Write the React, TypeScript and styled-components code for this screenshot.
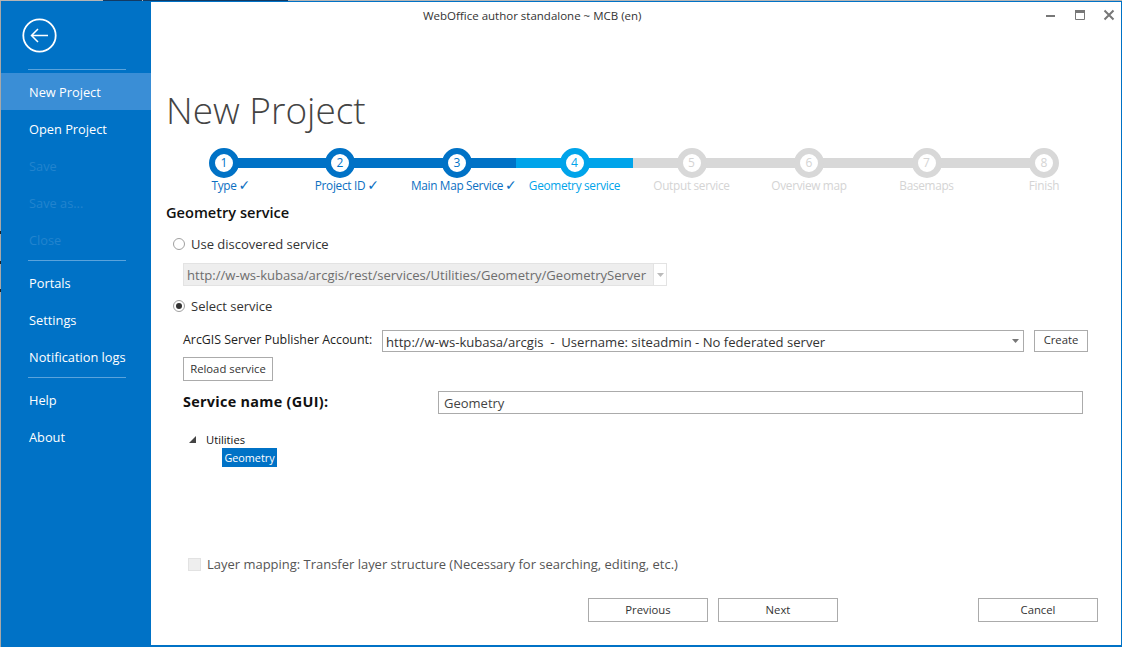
import React from 'react';
import styled, { createGlobalStyle } from 'styled-components';

const Global = createGlobalStyle`
  html, body { margin: 0; padding: 0; background: #fff; overflow: hidden; }
  * { box-sizing: border-box; }
`;

const BLUE = '#0072c6';
const FONT = `"Open Sans", "Noto Sans", "Liberation Sans", sans-serif`;

const Screen = styled.div`
  width: 1122px;
  height: 647px;
  display: flex;
  flex-direction: column;
  font-family: ${FONT};
  font-size: 12.5px;
  color: #262626;
  background:
    linear-gradient(#222, #222) 0 231px / 1px 3px no-repeat,
    linear-gradient(#222, #222) 0 261px / 1px 3px no-repeat,
    linear-gradient(#222, #222) 0 289px / 1px 3px no-repeat,
    #a8a8a8;
  overflow: hidden;
`;
const TopStrip = styled.div`
  height: 1px;
  flex: none;
  display: flex;
`;
const StripPart = styled.div<{ $w: number; $c: string }>`
  width: ${p => p.$w}px;
  background: ${p => p.$c};
  flex: ${p => (p.$w ? 'none' : '1')};
`;
const Frame = styled.div`
  flex: 1;
  display: flex;
  min-height: 0;
  margin-left: 1px;
  border-top: 1px solid ${BLUE};
  border-right: 1px solid ${BLUE};
  border-bottom: 2px solid ${BLUE};
  background: #fff;
`;
const Sidebar = styled.nav`
  width: 150px;
  flex: none;
  background: ${BLUE};
  display: flex;
  flex-direction: column;
  padding-top: 16px;
`;
const BackButton = styled.div`
  margin-left: 21px;
  width: 35px;
  height: 35px;
  svg { display: block; }
`;
const Rule = styled.div<{ $t: number; $b: number }>`
  height: 1px;
  margin: ${p => p.$t}px 25px ${p => p.$b}px 27px;
  background: #5aa3dc;
`;
const NavItem = styled.div<{ $active?: boolean; $disabled?: boolean }>`
  height: 37px;
  line-height: 39px;
  padding-left: 28px;
  font-size: 12.8px;
  color: ${p => (p.$disabled ? '#2284ce' : '#fff')};
  background: ${p => (p.$active ? '#3a8ed6' : 'transparent')};
`;
const Main = styled.main`
  flex: 1;
  display: flex;
  flex-direction: column;
  min-width: 0;
`;
const TitleBar = styled.header`
  height: 28px;
  flex: none;
  display: flex;
  align-items: center;
`;
const WindowTitle = styled.div`
  flex: 1;
  padding: 0 0 2px 272px;
  font-size: 11.5px;
  color: #333;
`;
const WindowControls = styled.div`
  width: 96px;
  flex: none;
  display: flex;
  gap: 13px;
  padding-left: 19px;
  svg { display: block; }
`;
const PageTitle = styled.h1`
  margin: 56px 0 0 15px;
  height: 48px;
  font-family: ${FONT};
  font-size: 37px;
  line-height: 48px;
  font-weight: 300;
  color: #444;
`;
const Stepper = styled.div`
  display: flex;
  margin: 14px 0 0 15px;
`;
const Step = styled.div<{ $w: number }>`
  width: ${p => p.$w}px;
  flex: none;
  display: flex;
  flex-direction: column;
  align-items: center;
`;
const DotRow = styled.div<{ $c: string; $edge?: 'first' | 'last' }>`
  width: 100%;
  height: 30px;
  display: flex;
  justify-content: center;
  align-items: center;
  background: linear-gradient(${p => p.$c}, ${p => p.$c})
    ${p => (p.$edge === 'first' ? 'right' : p.$edge === 'last' ? 'left' : 'center')} center /
    ${p => (p.$edge ? '50%' : '100%')} 10px no-repeat;
`;
const Dot = styled.div<{ $c: string; $text: string }>`
  width: 30px;
  height: 30px;
  border-radius: 50%;
  border: 6px solid ${p => p.$c};
  background: #fff;
  color: ${p => p.$text};
  font-size: 12px;
  line-height: 18px;
  text-align: center;
`;
const StepLabel = styled.div<{ $c: string }>`
  position: relative;
  margin-top: -1px;
  font-size: 11.8px;
  letter-spacing: -0.3px;
  line-height: 16px;
  white-space: nowrap;
  color: ${p => p.$c};
`;
const Check = styled.span`
  position: absolute;
  left: 100%;
  top: -1px;
  margin-left: 2px;
  font-family: "DejaVu Sans", sans-serif;
  font-size: 14px;
  letter-spacing: 0;
  line-height: 18px;
`;
const Form = styled.div`
  flex: 1;
  display: flex;
  flex-direction: column;
  padding-left: 15px;
`;
const SectionTitle = styled.div`
  margin-top: 9px;
  height: 20px;
  line-height: 20px;
  font-size: 14.6px;
  font-weight: 600;
  color: #111;
`;
const RadioRow = styled.label<{ $t: number }>`
  display: flex;
  align-items: center;
  height: 20px;
  margin: ${p => p.$t}px 0 0 7px;
  gap: 6px;
  font-size: 13px;
  color: #333;
`;
const Radio = styled.span<{ $on?: boolean }>`
  width: 12px;
  height: 12px;
  border-radius: 50%;
  border: 1px solid #a0a0a0;
  background: #fff;
  display: flex;
  align-items: center;
  justify-content: center;
  &::after {
    content: '';
    width: 6px;
    height: 6px;
    border-radius: 50%;
    background: ${p => (p.$on ? '#333' : 'transparent')};
  }
`;
const DisabledCombo = styled.div`
  margin: 9px 0 0 17px;
  width: 484px;
  height: 23px;
  display: flex;
  border: 1px solid #e3e3e3;
  background: #eee;
`;
const ComboValue = styled.div`
  flex: 1;
  padding-left: 3px;
  line-height: 23px;
  font-size: 13.07px;
  color: #6d6d6d;
  white-space: nowrap;
`;
const DisabledArrow = styled.div`
  width: 13px;
  flex: none;
  background: #fff;
  border-left: 1px solid #e3e3e3;
  display: flex;
  align-items: center;
  justify-content: center;
  svg { display: block; }
`;
const AccountRow = styled.div`
  display: flex;
  align-items: flex-start;
  margin: 14px 0 0 17px;
`;
const AccountLabel = styled.div`
  width: 199px;
  flex: none;
  padding-top: 1px;
  font-size: 12.4px;
  line-height: 18px;
  color: #222;
`;
const AccountCombo = styled.div`
  width: 642px;
  flex: none;
  height: 22px;
  display: flex;
  align-items: center;
  border: 1px solid #ababab;
  padding: 0 4px 0 3px;
`;
const AccountValue = styled.div`
  flex: 1;
  padding-top: 1px;
  font-size: 13.1px;
  color: #333;
  white-space: pre;
`;
const SmallButton = styled.div<{ $w: number }>`
  width: ${p => p.$w}px;
  flex: none;
  height: 23px;
  border: 1px solid #ababab;
  background: #fff;
  display: flex;
  align-items: center;
  justify-content: center;
  font-size: 11.3px;
  color: #333;
`;
const CreateButton = styled(SmallButton)`
  margin-left: 10px;
  height: 22px;
  padding-bottom: 3px;
`;
const ReloadButton = styled(SmallButton)`
  margin: 5px 0 0 17px;
  height: 24px;
  padding-bottom: 2px;
`;
const NameRow = styled.div`
  display: flex;
  align-items: center;
  margin: 10px 0 0 17px;
`;
const NameLabel = styled.div`
  width: 255px;
  flex: none;
  padding-bottom: 3px;
  font-size: 14.4px;
  letter-spacing: 0.3px;
  font-weight: 700;
  color: #111;
`;
const NameInput = styled.div`
  width: 645px;
  height: 23px;
  border: 1px solid #ababab;
  padding-left: 5px;
  line-height: 22px;
  font-size: 13px;
  color: #444;
`;
const Tree = styled.div`
  margin: 16px 0 0 23px;
  font-size: 11.2px;
`;
const TreeRow = styled.div`
  display: flex;
  align-items: center;
  height: 18px;
  gap: 10px;
  color: #111;
  svg { display: block; }
`;
const TreeSelected = styled.div`
  margin-left: 33px;
  width: 55px;
  height: 19px;
  line-height: 19px;
  text-align: center;
  font-size: 10.8px;
  background: ${BLUE};
  color: #fff;
`;
const CheckRow = styled.div`
  display: flex;
  align-items: center;
  gap: 6px;
  margin: 87px 0 0 22px;
  height: 20px;
  font-size: 12.97px;
  color: #555;
`;
const CheckBox = styled.span`
  width: 13px;
  height: 13px;
  background: #eee;
  border: 1px solid #e2e2e2;
`;
const Footer = styled.div`
  display: flex;
  margin: 24px 0 0 422px;
`;
const FooterButton = styled.div<{ $l: number }>`
  width: 120px;
  height: 24px;
  margin-left: ${p => p.$l}px;
  padding-bottom: 2px;
  border: 1px solid #ababab;
  display: flex;
  align-items: center;
  justify-content: center;
  font-size: 11.3px;
  color: #333;
`;

const C_DONE = BLUE;
const C_NOW = '#00a4ea';
const C_OFF = '#d8d8d8';
const steps: { n: number; label: string; w: number; state: 'done' | 'now' | 'off' }[] = [
  { n: 1, label: 'Type', w: 116, state: 'done' },
  { n: 2, label: 'Project ID', w: 116, state: 'done' },
  { n: 3, label: 'Main Map Service', w: 118, state: 'done' },
  { n: 4, label: 'Geometry service', w: 117, state: 'now' },
  { n: 5, label: 'Output service', w: 117, state: 'off' },
  { n: 6, label: 'Overview map', w: 118, state: 'off' },
  { n: 7, label: 'Basemaps', w: 117, state: 'off' },
  { n: 8, label: 'Finish', w: 118, state: 'off' },
];

export default function App() {
  return (
    <Screen>
      <Global />
      <TopStrip>
        <StripPart $w={103} $c="#b5b5b5" />
        <StripPart $w={39} $c="#123a63" />
        <StripPart $w={1} $c="#b5b5b5" />
        <StripPart $w={145} $c="#123a63" />
        <StripPart $w={0} $c="#b5b5b5" />
      </TopStrip>
      <Frame>
        <Sidebar>
          <BackButton>
            <svg width="35" height="35" viewBox="0 0 35 35" fill="none" stroke="#fff">
              <circle cx="17.5" cy="17.5" r="16.2" strokeWidth="1.8" />
              <path d="M26 17.5H9.5M16 11l-6.5 6.5L16 24" strokeWidth="1.5" />
            </svg>
          </BackButton>
          <Rule $t={16} $b={3} />
          <NavItem $active>New Project</NavItem>
          <NavItem>Open Project</NavItem>
          <NavItem $disabled>Save</NavItem>
          <NavItem $disabled>Save as...</NavItem>
          <NavItem $disabled>Close</NavItem>
          <Rule $t={2} $b={3} />
          <NavItem>Portals</NavItem>
          <NavItem>Settings</NavItem>
          <NavItem>Notification logs</NavItem>
          <Rule $t={2} $b={3} />
          <NavItem>Help</NavItem>
          <NavItem>About</NavItem>
        </Sidebar>
        <Main>
          <TitleBar>
            <WindowTitle>WebOffice author standalone ~ MCB (en)</WindowTitle>
            <WindowControls>
              <svg width="16" height="16" viewBox="0 0 16 16"><path d="M2 7h9v2H2z" fill="#777" /></svg>
              <svg width="16" height="16" viewBox="0 0 16 16" fill="none"><path d="M2.5 2.5h9v9h-9z" stroke="#777" /><path d="M2 2h10v3H2z" fill="#777" /></svg>
              <svg width="16" height="16" viewBox="0 0 16 16" fill="none"><path d="M2.5 2.5l9 9M11.5 2.5l-9 9" stroke="#777" strokeWidth="2" /></svg>
            </WindowControls>
          </TitleBar>
          <PageTitle>New Project</PageTitle>
          <Stepper>
            {steps.map((s, i) => {
              const c = s.state === 'done' ? C_DONE : s.state === 'now' ? C_NOW : C_OFF;
              const t = s.state === 'off' ? '#d4d4d4' : c;
              return (
                <Step key={s.n} $w={s.w}>
                  <DotRow $c={c} $edge={i === 0 ? 'first' : i === steps.length - 1 ? 'last' : undefined}>
                    <Dot $c={c} $text={t}>{s.n}</Dot>
                  </DotRow>
                  <StepLabel $c={t === C_DONE ? '#0b6fc2' : t}>
                    {s.label}
                    {s.state === 'done' && <Check>✓</Check>}
                  </StepLabel>
                </Step>
              );
            })}
          </Stepper>
          <Form>
            <SectionTitle>Geometry service</SectionTitle>
            <RadioRow $t={12}><Radio />Use discovered service</RadioRow>
            <DisabledCombo>
              <ComboValue>http://w-ws-kubasa/arcgis/rest/services/Utilities/Geometry/GeometryServer</ComboValue>
              <DisabledArrow>
                <svg width="7" height="4" viewBox="0 0 7 4"><path d="M0 0h7L3.5 4z" fill="#bbb" /></svg>
              </DisabledArrow>
            </DisabledCombo>
            <RadioRow $t={10}><Radio $on />Select service</RadioRow>
            <AccountRow>
              <AccountLabel>ArcGIS Server Publisher Account:</AccountLabel>
              <AccountCombo>
                <AccountValue>http://w-ws-kubasa/arcgis  -  Username: siteadmin - No federated server</AccountValue>
                <svg width="7" height="4" viewBox="0 0 7 4"><path d="M0 0h7L3.5 4z" fill="#777" /></svg>
              </AccountCombo>
              <CreateButton $w={54}>Create</CreateButton>
            </AccountRow>
            <ReloadButton $w={90}>Reload service</ReloadButton>
            <NameRow>
              <NameLabel>Service name (GUI):</NameLabel>
              <NameInput>Geometry</NameInput>
            </NameRow>
            <Tree>
              <TreeRow>
                <svg width="7" height="7" viewBox="0 0 7 7"><path d="M7 0v7H0z" fill="#444" /></svg>
                Utilities
              </TreeRow>
              <TreeSelected>Geometry</TreeSelected>
            </Tree>
            <CheckRow><CheckBox />Layer mapping: Transfer layer structure (Necessary for searching, editing, etc.)</CheckRow>
            <Footer>
              <FooterButton $l={0}>Previous</FooterButton>
              <FooterButton $l={10}>Next</FooterButton>
              <FooterButton $l={140}>Cancel</FooterButton>
            </Footer>
          </Form>
        </Main>
      </Frame>
    </Screen>
  );
}
